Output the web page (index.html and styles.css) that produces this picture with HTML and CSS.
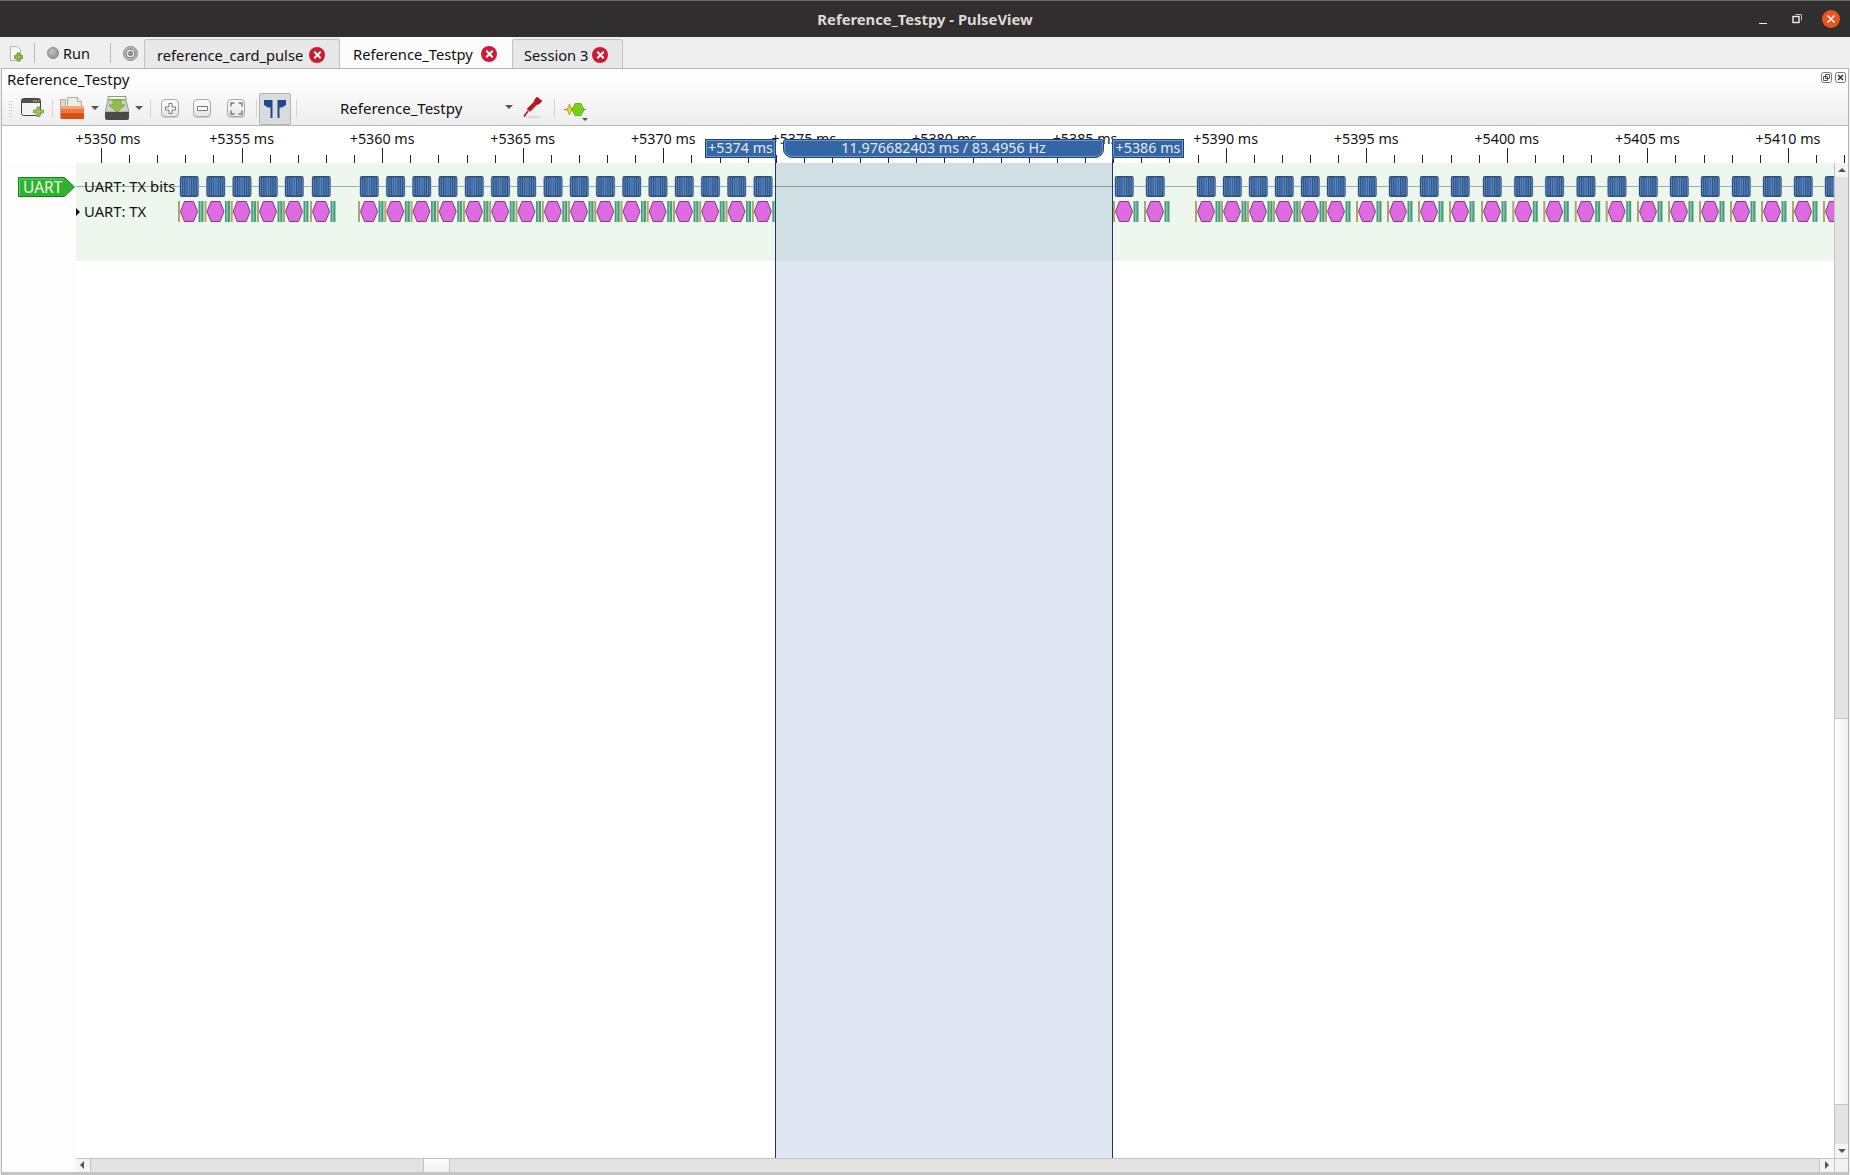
FILE: index.html
```html
<!DOCTYPE html>
<html lang="en">
<head>
<meta charset="UTF-8">
<title>Reference_Testpy - PulseView</title>
<link rel="stylesheet" href="styles.css">
</head>
<body>

<div class="window">
    <div class="titlebar">
        <span class="title-text">Reference_Testpy - PulseView</span>
        <div class="win-buttons">
            <span class="win-min"></span>
            <svg class="win-max" width="10" height="10" viewBox="0 0 10 10"><path d="M3.5 .5h6v6" fill="none" stroke="#bbb"/><rect x="1" y="2.5" width="6" height="6" fill="#302e2e" stroke="#eee" stroke-width="1.4"/></svg>
            <svg class="win-close" width="18" height="18" viewBox="0 0 18 18"><circle cx="9" cy="9" r="9" fill="#e95420"/><path d="M5.5 5.5l7 7M12.5 5.5l-7 7" stroke="#fff" stroke-width="1.5"/></svg>
        </div>
    </div>

    <div class="tabbar">
        <svg class="tool-new" width="16" height="16" viewBox="0 0 16 16"><path d="M2.5 .5h7l3 3v11h-10z" fill="#f7f7f5" stroke="#b5b5b0"/><path d="M9 7h3v2.500h2.500v3H12V15H9v-2.500H6.500v-3H9z" fill="#8fbf4d" stroke="#5f8a2a" stroke-width=".8"/></svg>
        <span class="tab-sep"></span>
        <span class="run-led"></span>
        <span class="run-text">Run</span>
        <span class="tab-sep"></span>
        <svg class="tool-target" width="15" height="15" viewBox="0 0 15 15"><circle cx="7.500" cy="7.500" r="7" fill="#bdbdb9" stroke="#888"/><circle cx="7.500" cy="7.500" r="4.500" fill="#e8e8e6" stroke="#666"/><circle cx="7.500" cy="7.500" r="2" fill="#999" stroke="#555" stroke-width=".7"/></svg>
        <div class="tab tab-first">reference_card_pulse <span class="tab-close"></span></div>
        <div class="tab tab-active">Reference_Testpy <span class="tab-close"></span></div>
        <div class="tab tab-last">Session 3 <span class="tab-close"></span></div>
    </div>

    <div class="dock">
        <div class="dock-head">
            <div class="dock-title">
                <span>Reference_Testpy</span>
                <div class="dock-buttons">
                    <svg width="11" height="11" viewBox="0 0 11 11"><rect x=".5" y=".5" width="10" height="10" rx="2" fill="none" stroke="#777"/><path d="M4.500 2.500h4v4h-4zM2.500 4.500h4v4h-4z" fill="none" stroke="#555"/></svg>
                    <svg width="11" height="11" viewBox="0 0 11 11"><rect x=".5" y=".5" width="10" height="10" rx="2" fill="none" stroke="#777"/><path d="M3 3l5 5M8 3l-5 5" stroke="#333" stroke-width="1.600"/></svg>
                </div>
            </div>
            <div class="toolbar">
                <span class="grip"></span>
                <svg class="ic-window" width="24" height="21" viewBox="0 0 24 21"><rect x=".5" y=".5" width="19" height="17" rx="2" fill="#f4f4f4" stroke="#444"/><path d="M1 1h18v4H1z" fill="#55524e"/><path d="M12 3h1.500M14.500 3H16M17 3h1" stroke="#e0b050" stroke-width="1.500"/><path d="M16 9h3v3h3.500v3H19v3.500h-3V15h-3.500v-3H16z" fill="#9cc45c" stroke="#6d9433" stroke-width=".8"/></svg>
                <span class="sep sep-a"></span>
                <svg class="ic-open" width="25" height="23" viewBox="0 0 25 23"><path d="M7.500 .5h10l4 4V12h-14z" fill="#ececea" stroke="#a8a8a4"/><path d="M17.500 .5v4h4" fill="#f8f8f6" stroke="#a8a8a4"/><path d="M.5 2.500h5v19h-5z" fill="#ead9c4" stroke="#bda98f"/><path d="M1 9h23v13H1z" fill="#dc4f14"/><path d="M1 9h23v3H1z" fill="#f4a678"/><path d="M1 12h23v4H1z" fill="#ea7a40"/></svg>
                <span class="drop drop-open"></span>
                <svg class="ic-save" width="24" height="24" viewBox="0 0 24 24"><path d="M3 .5h18v3H3z" fill="#f2f2f0" stroke="#8aa860"/><path d="M3 4h18l3 12H0z" fill="#cfd0c8" stroke="#9a9a92"/><path d="M0 16h24v6a2 2 0 0 1-2 2H2a2 2 0 0 1-2-2z" fill="#4a4a48"/><path d="M8 4h8v5h4l-8 7-8-7h4z" fill="#8fc242" stroke="#6b9a2c" stroke-width=".7"/></svg>
                <span class="drop drop-save"></span>
                <span class="sep sep-b"></span>
                <span class="zoom-btn zoom-in"><svg width="11" height="11" viewBox="0 0 11 11"><path d="M4 .5h3v3.500h3.500v3H7v3.500H4V7H.5V4H4z" fill="#fff" stroke="#777"/></svg></span>
                <span class="zoom-btn zoom-out"><svg width="11" height="5" viewBox="0 0 11 5"><path d="M.5 .5h10v4H.5z" fill="#fff" stroke="#777"/></svg></span>
                <span class="zoom-btn zoom-fit"><svg width="13" height="13" viewBox="0 0 13 13"><path d="M1 4.500V1h3.500M8.500 1H12v3.500M12 8.500V12H8.500M4.500 12H1V8.500" fill="none" stroke="#777" stroke-width="1.400"/></svg></span>
                <span class="sep sep-c"></span>
                <span class="cursor-toggle"><svg width="22" height="18" viewBox="0 0 22 18"><path d="M0 0h8.500v18h-2V7.500H4L0 5zM22 0h-8.500v18h2V7.500H18L22 5z" fill="#204a87"/></svg></span>
                <span class="sep sep-d"></span>
                <span class="device-name">Reference_Testpy</span>
                <span class="drop drop-device"></span>
                <svg class="ic-probe" width="21" height="22" viewBox="0 0 21 22"><ellipse cx="10" cy="20" rx="9" ry="1.500" fill="#ddd"/><path d="M15 0l5 4-3 3-2 .5-7 7-3-2.500 7-7 .5-2z" fill="#c4111c" stroke="#8d0b12" stroke-width=".5"/><path d="M6 14l-4 5.500" stroke="#a40f18" stroke-width="1.500"/></svg>
                <span class="sep sep-e"></span>
                <svg class="ic-decoder" width="22" height="13" viewBox="0 0 22 13"><path d="M0 6.500h22" stroke="#777"/><path d="M3 6.500L5.500 1 8 6.500 5.500 12z" fill="#ecd21e" stroke="#a69411" stroke-width=".7"/><path d="M8 6.500L11 .5h6l3 6-3 6h-6z" fill="#72d216" stroke="#4e9a06" stroke-width=".7"/></svg>
                <span class="drop drop-small"></span>
            </div>
        </div>

        <div class="view">
            <div class="ruler" id="ruler"></div>
            <div class="traces">
                <div class="header-col"></div>
                <div class="viewport">
                    <div class="row-band"></div>
                    <div class="trace-line"></div>
                    <svg class="trace-svg" id="traceSvg" width="1758" height="300"></svg>
                    <span class="expander"></span>
                </div>
                <div class="vscroll">
                    <span class="sb-btn sb-up"></span>
                    <span class="sb-track sb-track-top"></span>
                    <span class="sb-thumb-v"></span>
                    <span class="sb-track sb-track-bot"></span>
                    <span class="sb-btn sb-down"></span>
                </div>
            </div>
            <div class="hbar">
                <div class="hbar-spacer"></div>
                <div class="hscroll">
                    <span class="sb-btn sb-left"></span>
                    <span class="sb-track sb-track-l"></span>
                    <span class="sb-thumb-h"></span>
                    <span class="sb-track sb-track-r"></span>
                    <span class="sb-btn sb-right"></span>
                </div>
                <div class="hbar-corner"></div>
            </div>

            <div class="cursor-fill"></div>
            <div class="cursor-line cursor-a"></div>
            <div class="cursor-line cursor-b"></div>
            <div class="flag flag-left">+5374 ms</div>
            <div class="flag flag-mid">11.976682403 ms / 83.4956 Hz</div>
            <div class="flag flag-right">+5386 ms</div>

            <div class="badge">
                <svg width="58" height="20" viewBox="0 0 58 20"><path d="M.5 .5h46l10 9.500-10 9.500H.5z" fill="#2fb32f" stroke="#15801a"/><path d="M2 2h44" stroke="#8fe08f" stroke-width=".6"/><path d="M1.500 1.500v17" stroke="#8fe08f" stroke-width=".6"/></svg>
                <span>UART</span>
            </div>
            <div class="row-label row-bits">UART: TX bits</div>
            <div class="row-label row-tx">UART: TX</div>
        </div>
    </div>
</div>

<script src="script.js"></script>
</body>
</html>
```

FILE: styles.css
```css
* {
    box-sizing: border-box;
}
html, body {
    margin: 0;
    padding: 0;
    height: 100%;
    overflow: hidden;
}
body {
    font-family: "Noto Sans", sans-serif;
    font-size: 14px;
    color: #111;
    background-color: #efefef;
}
.window {
    display: flex;
    flex-direction: column;
    width: 1850px;
    height: 1175px;
}
.titlebar {
    position: relative;
    display: flex;
    align-items: center;
    justify-content: center;
    height: 37px;
    flex: none;
    background-color: #302e2e;
    border-top: 1px solid #6a6866;
}
.title-text {
    color: #dfdbd2;
    font-weight: 700;
    font-size: 14.8px;
}
.win-buttons {
    position: absolute;
    top: 0;
    right: 10px;
    height: 36px;
    display: flex;
    align-items: center;
}
.win-min {
    width: 8px;
    height: 1px;
    margin-top: 8px;
    margin-right: 25px;
    background-color: #eee;
}
.win-max {
    margin-right: 20px;
    margin-top: -1px;
}

/* session tabs */
.tabbar {
    display: flex;
    align-items: center;
    height: 31px;
    flex: none;
    padding-left: 8px;
    background-color: #efefef;
}
.tool-new {
    margin-top: 3px;
}
.tab-sep {
    width: 1px;
    height: 20px;
    margin-left: 10px;
    background-color: #bbb;
}
.run-led {
    width: 12px;
    height: 12px;
    margin-left: 12px;
    border-radius: 50%;
    background: radial-gradient(circle at 40% 35%, #c4c4bf, #85857f);
    border: 1px solid #8a8a85;
}
.run-text {
    margin-left: 4px;
    width: 37px;
    font-size: 14.5px;
}
.tool-target {
    margin-left: 12px;
    margin-right: 6px;
    margin-top: 1px;
}
.tab {
    display: flex;
    align-items: center;
    justify-content: space-between;
    height: 30px;
    margin-top: 2px;
    padding: 2px 14px 0 12px;
    background-color: #e8e8e8;
    border: 1px solid #c2c2c2;
    border-bottom: none;
    border-radius: 3px 3px 0 0;
    font-size: 14.7px;
    white-space: nowrap;
}
.tab-first {
    width: 196px;
}
.tab-active {
    width: 172px;
    height: 32px;
    margin-top: 0;
    padding-bottom: 0;
    background-color: #fcfcfc;
    border-color: #fcfcfc;
}
.tab-last {
    width: 111px;
    padding-left: 11px;
}
.tab-close {
    position: relative;
    width: 16px;
    height: 16px;
    border-radius: 50%;
    background-color: #cc1a32;
}
.tab-close::before,
.tab-close::after {
    content: "";
    position: absolute;
    left: 3.5px;
    top: 7px;
    width: 9px;
    height: 2px;
    background-color: #fff;
    transform: rotate(45deg);
}
.tab-close::after {
    transform: rotate(-45deg);
}

/* dock */
.dock {
    display: flex;
    flex-direction: column;
    flex: 1;
    min-height: 0;
    margin-left: 1px;
    margin-right: 1px;
    border-top: 1px solid #b4b4b4;
    border-left: 1px solid #b4b4b4;
    border-right: 1px solid #b4b4b4;
    border-bottom: 3px solid #c4c4c4;
    background-color: #fff;
}
.dock-head {
    flex: none;
    height: 57px;
    background: linear-gradient(#fdfdfd 0, #fdfdfd 25%, #eeeeee 100%);
    border-bottom: 1px solid #b9b9b9;
}
.dock-title {
    display: flex;
    align-items: center;
    justify-content: space-between;
    height: 23px;
    padding: 0 2px 4px 5px;
    font-size: 15px;
}
.dock-buttons {
    display: flex;
    gap: 3px;
    margin-top: -2px;
}
.dock-buttons svg {
    display: block;
}
.toolbar {
    position: relative;
    height: 33px;
}
.toolbar > * {
    position: absolute;
}
.grip {
    left: 6px;
    top: 8px;
    width: 5px;
    height: 18px;
    background-image: radial-gradient(circle, #aaa 0.7px, transparent 0.8px);
    background-size: 2.5px 3px;
}
.sep {
    top: 7px;
    width: 1px;
    height: 19px;
    background-color: #d4d4d4;
}
.sep-a { left: 50px; }
.sep-b { left: 148px; }
.sep-c { left: 254px; }
.sep-d { left: 294px; }
.sep-e { left: 552px; }
.ic-window { left: 19px; top: 6px; }
.ic-open { left: 58px; top: 5px; }
.ic-save { left: 103px; top: 4px; }
.drop {
    width: 0;
    height: 0;
    border-left: 4px solid transparent;
    border-right: 4px solid transparent;
    border-top: 4px solid #555;
}
.drop-open { left: 89px; top: 14px; }
.drop-save { left: 133px; top: 14px; }
.drop-device { left: 503px; top: 13px; }
.drop-small {
    left: 580px;
    top: 26px;
    border-left-width: 3px;
    border-right-width: 3px;
    border-top-width: 3px;
}
.zoom-btn {
    top: 7px;
    width: 18px;
    height: 18px;
    display: flex;
    align-items: center;
    justify-content: center;
    background: linear-gradient(#fbfbfb, #e6e6e6);
    border: 1px solid #aaa;
    border-radius: 4px;
    box-shadow: 0 1px 0 #ccc;
}
.zoom-in { left: 159px; }
.zoom-out { left: 191px; }
.zoom-fit { left: 225px; }
.cursor-toggle {
    left: 257px;
    top: 1px;
    width: 32px;
    height: 32px;
    display: flex;
    align-items: center;
    justify-content: center;
    background-color: #d9dcdf;
    border: 1px solid #b4b4b4;
    border-radius: 2px;
}
.device-name {
    left: 338px;
    top: 6px;
    font-size: 15px;
}
.ic-probe { left: 520px; top: 5px; }
.ic-decoder { left: 562px; top: 11px; }

/* trace view */
.view {
    position: relative;
    display: flex;
    flex-direction: column;
    flex: 1;
    min-height: 0;
    overflow: hidden;
}
.ruler {
    position: relative;
    flex: none;
    height: 37px;
    background-color: #fff;
}
.ruler-tick {
    position: absolute;
    bottom: 0;
    width: 1px;
    height: 8px;
    background-color: #222;
}
.ruler-tick.major {
    height: 15px;
}
.ruler-label {
    position: absolute;
    top: 3px;
    transform: translateX(-50%);
    font-size: 14.3px;
    white-space: nowrap;
}
.traces {
    display: flex;
    flex: 1;
    min-height: 0;
}
.header-col {
    flex: none;
    width: 74px;
    background-color: #fdfdfd;
}
.viewport {
    position: relative;
    flex: 1;
    overflow: hidden;
    background-color: #fff;
}
.row-band {
    height: 98px;
    background-color: #eef7ee;
}
.trace-line {
    position: absolute;
    left: 0;
    right: 0;
    top: 23px;
    height: 1px;
    background-color: #a3a8a3;
}
.trace-svg {
    position: absolute;
    left: 0;
    top: 0;
}
.expander {
    position: absolute;
    left: 0;
    top: 45px;
    width: 0;
    height: 0;
    border-top: 4px solid transparent;
    border-bottom: 4px solid transparent;
    border-left: 4px solid #111;
}
.vscroll {
    display: flex;
    flex-direction: column;
    flex: none;
    width: 14px;
    border-left: 1px solid #c4c4c4;
}
.sb-btn {
    position: relative;
    display: block;
    flex: none;
    background-color: #f4f4f4;
}
.sb-up, .sb-down {
    height: 14px;
}
.sb-up::after, .sb-down::after, .sb-left::after, .sb-right::after {
    content: "";
    position: absolute;
    width: 0;
    height: 0;
}
.sb-up::after {
    left: 3px;
    top: 5px;
    border-left: 4px solid transparent;
    border-right: 4px solid transparent;
    border-bottom: 4px solid #555;
}
.sb-down::after {
    left: 3px;
    top: 5px;
    border-left: 4px solid transparent;
    border-right: 4px solid transparent;
    border-top: 4px solid #555;
}
.sb-track {
    display: block;
    background-color: #e3e3e3;
}
.sb-track-top {
    flex: none;
    height: 541px;
}
.sb-thumb-v {
    display: block;
    flex: none;
    height: 387px;
    background: linear-gradient(90deg, #fdfdfd, #f0f0f0);
    border-top: 1px solid #c4c4c4;
    border-bottom: 1px solid #c4c4c4;
}
.sb-track-bot {
    flex: 1;
}
.hbar {
    display: flex;
    flex: none;
    height: 14px;
}
.hbar-spacer {
    flex: none;
    width: 74px;
    background-color: #fdfdfd;
}
.hscroll {
    display: flex;
    flex: 1;
    border-top: 1px solid #c4c4c4;
}
.hbar-corner {
    flex: none;
    width: 14px;
    background-color: #f2f2f2;
    border-top: 1px solid #c4c4c4;
    border-left: 1px solid #c4c4c4;
}
.sb-left, .sb-right {
    width: 14px;
}
.sb-left::after {
    left: 4px;
    top: 2px;
    border-top: 4px solid transparent;
    border-bottom: 4px solid transparent;
    border-right: 4px solid #555;
}
.sb-right::after {
    left: 5px;
    top: 2px;
    border-top: 4px solid transparent;
    border-bottom: 4px solid transparent;
    border-left: 4px solid #555;
}
.sb-track-l {
    flex: none;
    width: 333px;
    border-left: 1px solid #c4c4c4;
}
.sb-thumb-h {
    display: block;
    flex: none;
    width: 27px;
    background: linear-gradient(#fdfdfd, #f2f2f2);
    border-left: 1px solid #c4c4c4;
    border-right: 1px solid #c4c4c4;
}
.sb-track-r {
    flex: 1;
    border-right: 1px solid #c4c4c4;
}

/* cursors */
.cursor-fill {
    position: absolute;
    left: 773px;
    width: 337px;
    top: 37px;
    bottom: 14px;
    background-color: rgba(0, 63, 147, 0.13);
}
.cursor-line {
    position: absolute;
    top: 31px;
    bottom: 14px;
    width: 1px;
    background-color: #1d3a63;
}
.cursor-a { left: 773px; }
.cursor-b { left: 1110px; }
.flag {
    position: absolute;
    top: 13px;
    height: 19px;
    line-height: 16px;
    text-align: center;
    color: #e6e9ee;
    font-size: 14.3px;
    white-space: nowrap;
    background-color: #3465a4;
    border: 1px solid #1f3f6e;
    box-shadow: inset 0 0 0 1px #6c9ad6;
}
.flag-left {
    left: 703px;
    width: 71px;
}
.flag-left::after, .flag-right::after {
    content: "";
    position: absolute;
    top: 16px;
    width: 0;
    height: 0;
    border-top: 5px solid #3465a4;
}
.flag-left::after {
    right: -1px;
    border-left: 3px solid transparent;
}
.flag-right::after {
    left: -1px;
    border-right: 3px solid transparent;
}
.flag-mid {
    left: 781px;
    width: 321px;
    border-radius: 3px 3px 9px 9px;
}
.flag-right {
    left: 1110px;
    width: 72px;
}
.badge {
    position: absolute;
    left: 16px;
    top: 51px;
    width: 58px;
    height: 20px;
}
.badge svg {
    position: absolute;
    left: 0;
    top: 0;
}
.badge span {
    position: absolute;
    left: 5px;
    top: 0;
    line-height: 20px;
    color: #eafbe8;
    font-size: 15.5px;
}
.row-label {
    position: absolute;
    left: 82px;
    font-size: 14.8px;
    white-space: nowrap;
}
.row-bits { top: 50px; }
.row-tx { top: 75px; }
```

FILE: script.js
```js
// ruler: one major tick per 5 ms, five minor steps between them
const ruler = document.getElementById('ruler');
const LEFT = 2;          // x of the view in the window
const TOP_Y = 163;       // y of the first trace row in the window
const VIEW_X = 76;       // x of the viewport in the window
const CURSOR_X = 775;    // the data before the first cursor stops here
const MS_STEP = 140.58 / 5;

for (let i = 0; i * MS_STEP + 101 < 1846; i++) {
    const x = 101 + i * MS_STEP;
    const tick = document.createElement('div');
    tick.className = 'ruler-tick' + (i % 5 === 0 ? ' major' : '');
    tick.style.left = Math.round(x - LEFT) + 'px';
    ruler.appendChild(tick);

    if (i % 5 === 0) {
        const label = document.createElement('div');
        label.className = 'ruler-label';
        label.textContent = '+' + (5350 + i) + ' ms';
        label.style.left = Math.max(x, 108) - LEFT + 'px';
        ruler.appendChild(label);
    }
}

// UART frames, by x of the start of each frame
const frames = [180, 206.5, 232.7, 259, 285, 312,
    360, 386.3, 412.5, 438.7, 465, 491.2, 517.5, 543.8, 570, 596.2, 622.5, 648.7, 675, 701.2, 727.5, 753.8,
    1115, 1146,
    1197, 1223, 1249, 1275, 1301, 1327,
    1358, 1389, 1420, 1451, 1483, 1514.3, 1545.3, 1576.7, 1607.7, 1639, 1670, 1701, 1732, 1763, 1794, 1825];

const SVG_NS = 'http://www.w3.org/2000/svg';
const svg = document.getElementById('traceSvg');

function shape(tag, attrs) {
    const el = document.createElementNS(SVG_NS, tag);
    for (const key in attrs) {
        el.setAttribute(key, attrs[key]);
    }
    svg.appendChild(el);
    return el;
}

function stripes(x, y, w, h, step, fill) {
    for (let s = x; s < x + w - 1; s += step) {
        shape('rect', {x: s, y: y, width: step / 2, height: h, fill: fill});
    }
}

frames.forEach((f) => {
    const x = f - VIEW_X;

    // bits row
    shape('rect', {x: x - 0.5, y: 176 - TOP_Y, width: 19.5, height: 21, rx: 3, fill: '#a9bccb'});
    shape('rect', {x: x, y: 176 - TOP_Y, width: 18.5, height: 21, rx: 2, fill: '#2f4f7a'});
    stripes(x + 1, 177.5 - TOP_Y, 17, 18, 2.25, '#5584c2');
    shape('rect', {x: x + 7, y: 177.5 - TOP_Y, width: 4, height: 18, fill: '#5f95dc', opacity: 0.3});

    // annotation row
    const top = 201 - TOP_Y;
    const bot = 222 - TOP_Y;
    const mid = (top + bot) / 2;
    shape('rect', {x: x - 2, y: top, width: 2, height: bot - top, fill: '#b0a56c'});
    shape('polygon', {
        points: `${x + 0.5},${mid} ${x + 4.5},${top + 0.5} ${x + 13.5},${top + 0.5} ${x + 17.5},${mid} ${x + 13.5},${bot - 0.5} ${x + 4.5},${bot - 0.5}`,
        fill: '#df6be0',
        stroke: '#85378a'
    });
    const greenW = f < CURSOR_X ? Math.min(5, CURSOR_X - f - 18.5) : 5;
    shape('rect', {x: x + 18.5, y: top, width: greenW, height: bot - top, fill: '#4a9a7c'});
    shape('rect', {x: x + 20, y: top, width: Math.min(1.5, greenW), height: bot - top, fill: '#7ec9a6'});
});
```
